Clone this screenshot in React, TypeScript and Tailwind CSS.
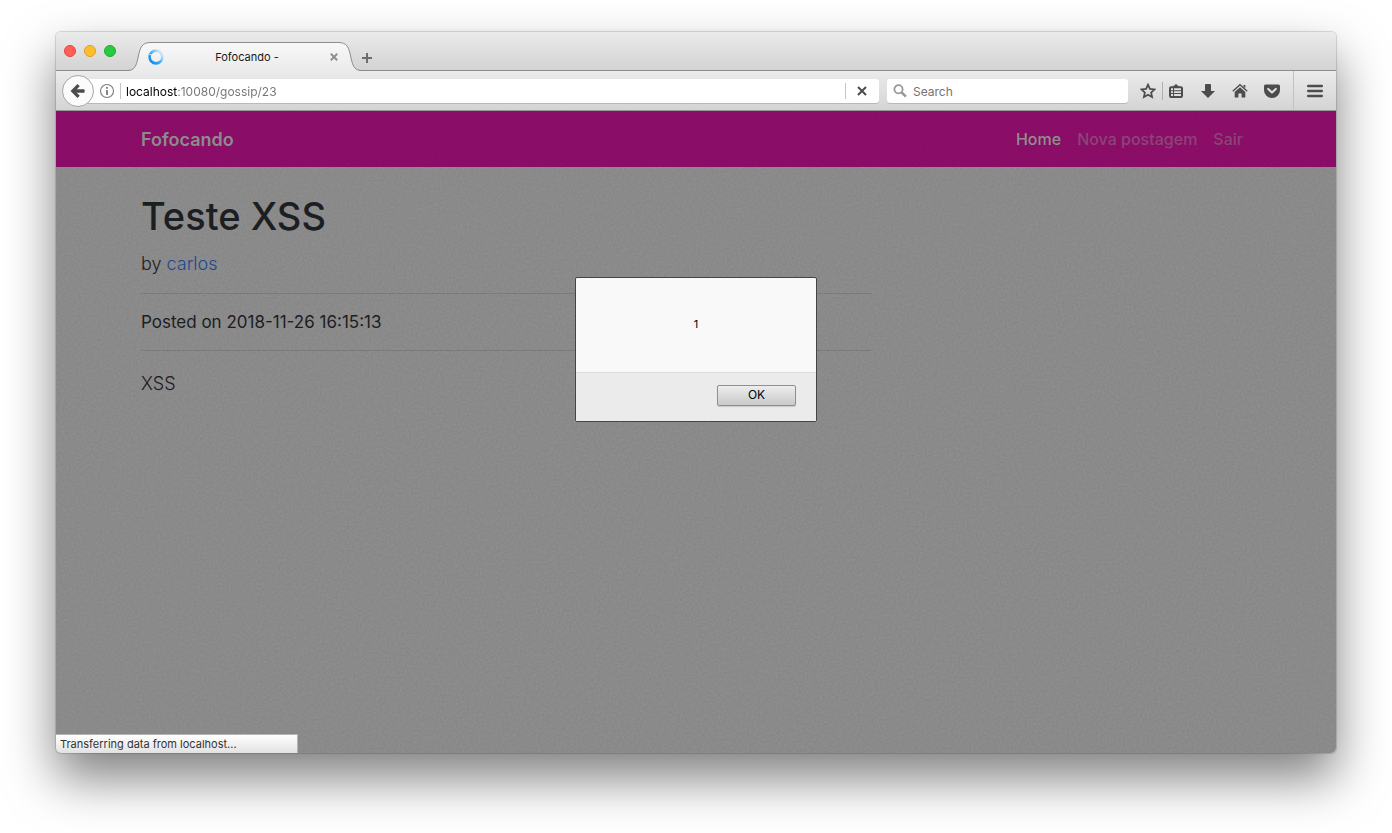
import { useState } from "react";
import type { ReactNode } from "react";

function BackArrow() {
  return (
    <svg viewBox="0 0 16 16" className="size-4" aria-hidden="true">
      <path d="M14 8H4" stroke="#4c4c4c" strokeWidth="3.6" strokeLinecap="butt" fill="none" />
      <path d="M8.6 2.2L2.8 8l5.8 5.8" stroke="#4c4c4c" strokeWidth="3.2" strokeLinejoin="miter" fill="none" />
      <path d="M13.6 6.2a1 1 0 0 1 1 1v1.6a1 1 0 0 1-1 1z" fill="#4c4c4c" />
    </svg>
  );
}

function InfoIcon() {
  return (
    <svg viewBox="0 0 16 16" className="size-4 shrink-0" aria-hidden="true">
      <circle cx="8" cy="8" r="6.5" fill="none" stroke="#7a7a7a" strokeWidth="1.1" />
      <rect x="7.1" y="4" width="1.8" height="1.8" fill="#7a7a7a" />
      <rect x="7.1" y="7" width="1.8" height="5" fill="#7a7a7a" />
    </svg>
  );
}

function Cross({ className, color, width }: { className: string; color: string; width: number }) {
  return (
    <svg viewBox="0 0 10 10" className={className} aria-hidden="true">
      <path d="M1 1l8 8M9 1l-8 8" stroke={color} strokeWidth={width} fill="none" />
    </svg>
  );
}

function SearchIcon() {
  return (
    <svg viewBox="0 0 16 16" className="size-4 shrink-0" aria-hidden="true">
      <circle cx="6.5" cy="6.2" r="4.1" fill="none" stroke="#999" strokeWidth="1.8" />
      <path d="M9.6 9.4l4.3 4.2" stroke="#999" strokeWidth="2.6" fill="none" />
    </svg>
  );
}

function StarIcon() {
  return (
    <svg viewBox="0 0 16 16" className="size-4" aria-hidden="true">
      <path
        d="M8 1.6l1.9 4.3 4.7.5-3.5 3.1 1 4.6L8 11.7l-4.1 2.4 1-4.6L1.4 6.4l4.7-.5z"
        fill="none"
        stroke="#4c4c4c"
        strokeWidth="1.7"
        strokeLinejoin="miter"
      />
    </svg>
  );
}

function LibraryIcon() {
  return (
    <svg viewBox="0 0 16 16" className="size-4" aria-hidden="true">
      <path
        fillRule="evenodd"
        fill="#4c4c4c"
        d="M5.5 2.4h1L8 .8l1.500 1.600h1v.9h2.500a2 2 0 0 1 2 2v7.700a2 2 0 0 1-2 2H3a2 2 0 0 1-2-2V5.300a2 2 0 0 1 2-2h2.500zM3 5.300v1.900h2V5.300zM6 5.300v1.900h7V5.300zM3 8.200v1.900h2V8.200zM6 8.200v1.900h7V8.200zM3 11.100V13h2v-1.900zM6 11.100V13h7v-1.900z"
      />
    </svg>
  );
}

function DownloadIcon() {
  return (
    <svg viewBox="0 0 16 16" className="size-4" aria-hidden="true">
      <path d="M5 2a1 1 0 0 1 1-1h4a1 1 0 0 1 1 1v6h4L8 15 1 8h4z" fill="#4c4c4c" />
    </svg>
  );
}

function HomeIcon() {
  return (
    <svg viewBox="0 0 16 16" className="size-4" aria-hidden="true">
      <path d="M.8 8.300L8 1.700l7.200 6.600" fill="none" stroke="#4c4c4c" strokeWidth="1.300" />
      <path d="M11.500 2h1.800v3.200l-1.800-1.600z" fill="#4c4c4c" />
      <path d="M8 4.200l5.300 4.800v5.500H9.600v-4H6.400v4H2.700V9z" fill="#4c4c4c" />
    </svg>
  );
}

function PocketIcon() {
  return (
    <svg viewBox="0 0 16 16" className="size-4" aria-hidden="true">
      <path d="M1.600 1.400h12.800A1.600 1.600 0 0 1 16 3v4.200a8 7.800 0 0 1-16 0V3a1.600 1.600 0 0 1 1.600-1.600z" fill="#4c4c4c" />
      <path d="M4.200 5.900L8 9.500l3.800-3.600" fill="none" stroke="#e2e2e2" strokeWidth="2" strokeLinecap="round" strokeLinejoin="round" />
    </svg>
  );
}

function MenuIcon() {
  return (
    <svg viewBox="0 0 16 16" className="size-4" aria-hidden="true">
      <path d="M1.300 3h13.400M1.300 8h13.400M1.300 13h13.400" stroke="#4c4c4c" strokeWidth="2.600" strokeLinecap="round" />
    </svg>
  );
}

function TabCurve({ flipped }: { flipped?: boolean }) {
  return (
    <svg viewBox="0 0 24 29" className={flipped ? "h-[29px] w-6 shrink-0 -scale-x-100" : "h-[29px] w-6 shrink-0"} aria-hidden="true">
      <defs>
        <linearGradient id="tabFill" x1="0" y1="0" x2="0" y2="1">
          <stop offset="0" stopColor="#f8f8f8" />
          <stop offset="1" stopColor="#ebebeb" />
        </linearGradient>
      </defs>
      <path d="M0 29C7 28.500 9 25 11 16C13 5 15 .5 24 .5V29z" fill="url(#tabFill)" />
      <path d="M0 28.500C7 28.500 9 25 11 16C13 5 15 .5 24 .5" fill="none" stroke="#8c8c8c" />
    </svg>
  );
}

function Spinner() {
  return (
    <svg viewBox="0 0 16 16" className="size-4 shrink-0" aria-hidden="true">
      <defs>
        <linearGradient id="spin" x1="0.1" y1="0.9" x2="0.9" y2="0.2">
          <stop offset="0" stopColor="#0d8cf0" />
          <stop offset="0.45" stopColor="#3aa8f6" />
          <stop offset="1" stopColor="#cfe6f8" />
        </linearGradient>
      </defs>
      <circle cx="8" cy="8" r="6.400" fill="none" stroke="url(#spin)" strokeWidth="2.600" />
      <path d="M1.600 5.200L4 6.200" stroke="#f4f4f4" strokeWidth="1" />
    </svg>
  );
}

function Grain() {
  return (
    <svg className="pointer-events-none absolute inset-0 size-full opacity-[0.035]" aria-hidden="true">
      <filter id="grain">
        <feTurbulence type="fractalNoise" baseFrequency="0.45" numOctaves="2" stitchTiles="stitch" />
        <feColorMatrix type="matrix" values="0 0 0 0 0  0 0 0 0 0  0 0 0 0 0  3 0 0 0 -1" />
      </filter>
      <rect width="100%" height="100%" filter="url(#grain)" />
    </svg>
  );
}

function ToolButton({ label, children }: { label: string; children: ReactNode }) {
  return (
    <button type="button" aria-label={label} className="flex h-8 w-8 shrink-0 items-center justify-center">
      {children}
    </button>
  );
}

function TitleBar() {
  return (
    <div className="flex h-[39px] items-end border-b border-[#8c8c8c] bg-linear-to-b from-[#ebebeb] to-[#d3d3d3] pl-2">
      <div className="mr-[11px] mb-[13px] flex gap-2">
        <button type="button" aria-label="Close window" className="size-3 rounded-full border border-[#e2463f] bg-[#ff5f57]" />
        <button type="button" aria-label="Minimise window" className="size-3 rounded-full border border-[#dfa023] bg-[#ffbd2e]" />
        <button type="button" aria-label="Zoom window" className="size-3 rounded-full border border-[#1dad2c] bg-[#28ca42]" />
      </div>
      <div className="-mb-px flex">
        <TabCurve />
        <div className="flex h-[29px] w-[187px] items-center border-t border-[#8c8c8c] bg-linear-to-b from-[#f8f8f8] to-[#ebebeb]">
          <span className="-ml-[3px]">
            <Spinner />
          </span>
          <span className="flex-1 pl-1 text-center text-[11px] text-[#1a1a1a]">Fofocando -</span>
          <button type="button" aria-label="Close tab" className="-mr-1 flex size-4 items-center justify-center">
            <Cross className="size-2" color="#8e8e8e" width={2.4} />
          </button>
        </div>
        <TabCurve flipped />
      </div>
      <button type="button" aria-label="New tab" className="mb-1 -ml-[3px] flex size-4 items-center justify-center">
        <svg viewBox="0 0 12 12" className="size-3" aria-hidden="true">
          <path d="M6 1v10M1 6h10" stroke="#6c6c6c" strokeWidth="2" />
        </svg>
      </button>
    </div>
  );
}

function Toolbar() {
  return (
    <div className="flex h-10 items-center border-b border-[#9a9a9a] bg-linear-to-b from-[#ebebeb] to-[#d4d4d4] pl-1.5">
      <button
        type="button"
        aria-label="Back"
        className="z-10 flex size-8 shrink-0 items-center justify-center rounded-full border border-[#a6a6a6] bg-[#fbfbfb]"
      >
        <BackArrow />
      </button>
      <div className="-ml-3 flex h-6 flex-1 items-center rounded-r-[3px] bg-white pl-[17px] shadow-[0_1px_0_#b9b9b9]">
        <InfoIcon />
        <span className="ml-[5px] h-4 w-px bg-[#c4c4c4]" />
        <input
          aria-label="Address"
          defaultValue="localhost:10080/gossip/23"
          className="ml-[5px] h-6 min-w-0 flex-1 bg-[linear-gradient(90deg,#000_52px,#737373_52px)] bg-clip-text pt-0.5 text-xs text-transparent caret-black outline-none"
        />
        <span className="h-4 w-px bg-[#c4c4c4]" />
        <button type="button" aria-label="Stop loading" className="flex h-6 w-[33px] items-center justify-center pr-0.5">
          <Cross className="size-[10px]" color="#4c4c4c" width={2} />
        </button>
      </div>
      <div className="ml-2 flex h-6 w-[241px] shrink-0 items-center rounded-[3px] bg-white pl-[5px] shadow-[0_1px_0_#b9b9b9]">
        <SearchIcon />
        <input
          aria-label="Search"
          placeholder="Search"
          className="ml-[5px] h-6 min-w-0 flex-1 pt-0.5 text-xs outline-none placeholder:text-[#737373]"
        />
      </div>
      <div className="ml-1 flex h-full shrink-0 items-center">
        <ToolButton label="Bookmark this page">
          <StarIcon />
        </ToolButton>
        <span className="-mr-[3px] -ml-0.5 h-[18px] w-px bg-[#b0b0b0]" />
        <ToolButton label="Show bookmarks">
          <LibraryIcon />
        </ToolButton>
        <ToolButton label="Downloads">
          <DownloadIcon />
        </ToolButton>
        <ToolButton label="Home page">
          <HomeIcon />
        </ToolButton>
        <ToolButton label="Save to Pocket">
          <PocketIcon />
        </ToolButton>
        <span className="ml-[5px] h-full w-px bg-[#c2c2c2]" />
        <span className="mx-[5px]">
          <ToolButton label="Open menu">
            <MenuIcon />
          </ToolButton>
        </span>
      </div>
    </div>
  );
}

function Page() {
  return (
    <>
      <header className="bg-[#8d0e69]">
        <nav className="mx-auto flex h-14 max-w-[1140px] items-center justify-between px-[15px]">
          <a href="#" className="pt-0.5 text-lg font-semibold text-[#8f8f8f]">
            Fofocando
          </a>
          <div className="flex text-base font-medium text-[#8e467b]">
            <a href="#" className="px-2 text-[#939393]">
              Home
            </a>
            <a href="#" className="px-2">
              Nova postagem
            </a>
            <a href="#" className="px-2">
              Sair
            </a>
          </div>
        </nav>
      </header>
      <main className="mx-auto max-w-[1140px] px-[15px] pt-6 text-[#1d2023]">
        <article className="max-w-[730px]">
          <h1 className="text-[38px] leading-[50px] font-medium">Teste XSS</h1>
          <p className="mt-1.5 pt-1 text-lg leading-[26px] font-light">
            by{" "}
            <a href="#" className="text-[#1d4a94]">
              carlos
            </a>
          </p>
          <hr className="my-4 border-[#7d7d7d]" />
          <p className="text-[17px] leading-6">Posted on 2018-11-26 16:15:13</p>
          <hr className="my-4 border-[#7d7d7d]" />
          <p className="pt-1 text-lg leading-[26px] font-light">XSS</p>
        </article>
      </main>
    </>
  );
}

function AlertDialog({ onClose }: { onClose: () => void }) {
  return (
    <div
      role="alertdialog"
      aria-label="1"
      className="absolute top-[166px] left-1/2 w-[242px] -translate-x-1/2 rounded-[2px] border border-[#454545] bg-[#f9f9f9]"
    >
      <p className="flex h-[94px] items-center justify-center pb-0.5 text-[11px] text-black">1</p>
      <div className="flex h-[49px] items-start justify-end border-t border-[#dcdcdc] bg-[#ebebeb] pt-3 pr-5">
        <button
          type="button"
          onClick={onClose}
          className="h-[21px] w-[79px] rounded-[2px] border border-[#8f8f8f] bg-linear-to-b from-[#ededed] to-[#c9c9c9] pb-0.5 text-xs leading-none text-black shadow-[0_1px_1px_rgba(0,0,0,0.15)]"
        >
          OK
        </button>
      </div>
    </div>
  );
}

export default function App() {
  const [open, setOpen] = useState(true);
  return (
    <div className="flex min-h-screen flex-col bg-white px-14 pt-8 pb-20 font-[Inter,'Liberation_Sans',sans-serif]">
      <div className="flex flex-1 flex-col overflow-hidden rounded-[5px] shadow-[0_25px_50px_rgba(0,0,0,0.5),0_0_1px_1px_rgba(0,0,0,0.15)]">
        <TitleBar />
        <Toolbar />
        <div className="relative flex-1 bg-[#8d8d8d]">
          <Page />
          <Grain />
          {open && <AlertDialog onClose={() => setOpen(false)} />}
          <div
            role="status"
            className="absolute bottom-0 left-0 w-[242px] border-t border-r border-[#b5b5b5] bg-linear-to-b from-white to-[#e2e2e2] px-1 text-[11px] leading-[18px] text-[#333]"
          >
            Transferring data from localhost...
          </div>
        </div>
      </div>
    </div>
  );
}
